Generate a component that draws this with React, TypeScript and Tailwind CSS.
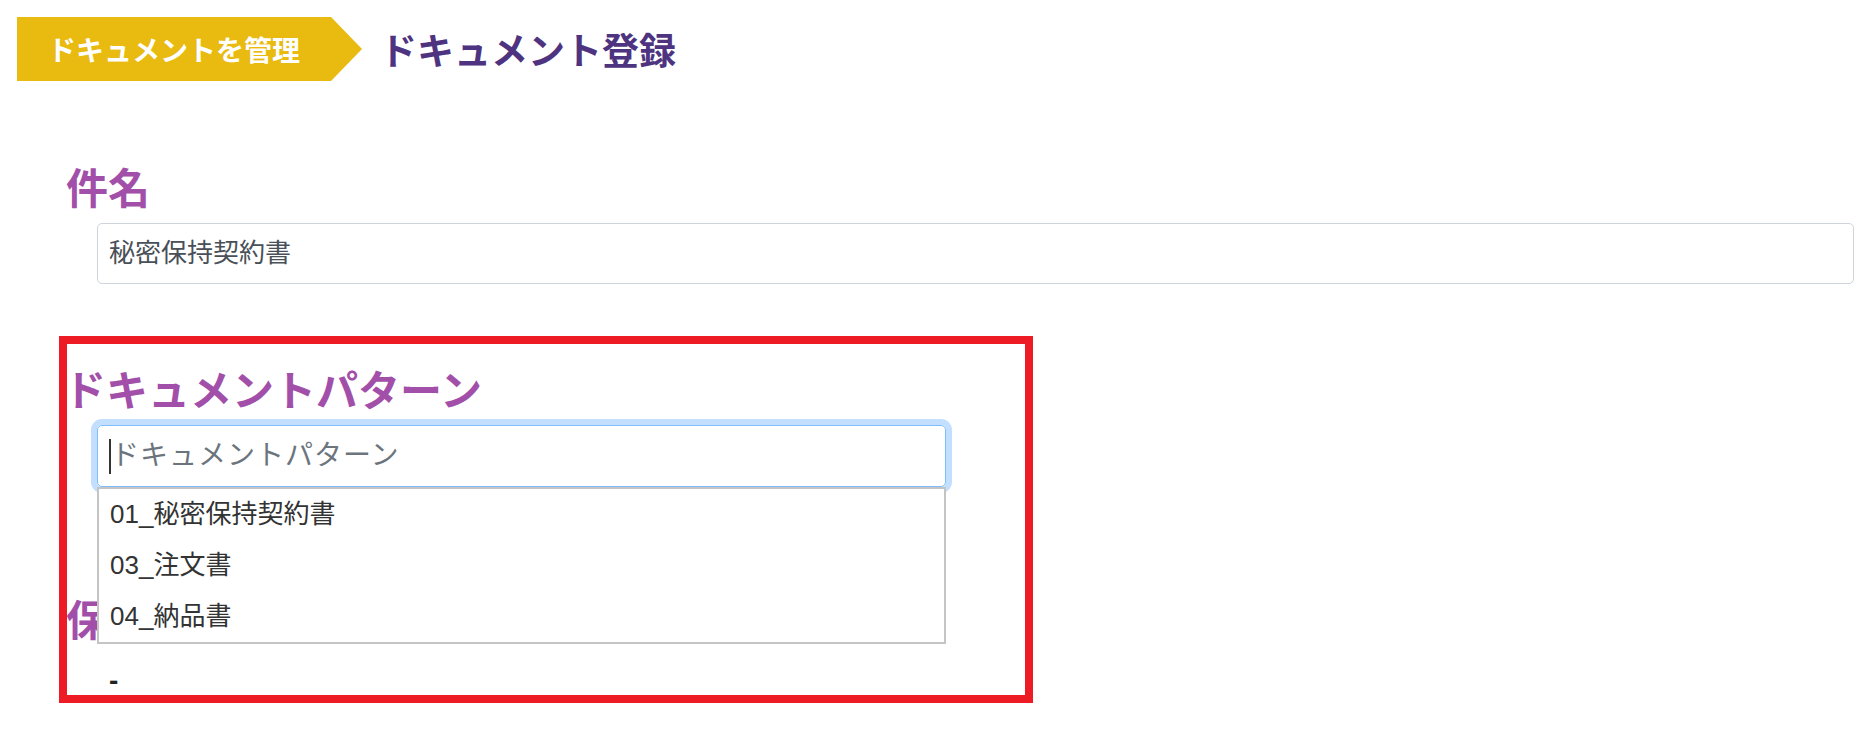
import React from "react";

const jp = { fontFamily: '"Noto Sans CJK JP", "Noto Sans", sans-serif' };
const field = { fontFamily: '"Liberation Sans", "Noto Sans CJK JP", sans-serif' };

const patterns = ["01_秘密保持契約書", "03_注文書", "04_納品書"];

function Label({ children }: { children: React.ReactNode }) {
  return <h2 className="text-[42px] leading-[48px] font-bold text-[#a24fa9]">{children}</h2>;
}

export default function App() {
  return (
    <div className="relative min-h-[744px] bg-white pr-[19px]" style={jp}>
      <div className="flex items-center pt-[17px] pl-[17px]">
        <div className="flex h-16">
          <div className="w-[314px] bg-[#e9ba0f] flex items-center justify-center text-white text-[28px] font-bold">ドキュメントを管理</div>
          <div className="w-0 h-0 border-y-[32px] border-y-transparent border-l-[31px] border-l-[#e9ba0f]" />
        </div>
        <h1 className="ml-[18px] text-[37px] leading-[48px] font-bold text-[#4e3480]">ドキュメント登録</h1>
      </div>

      <div className="pl-[66px]">
        <section className="mt-[81px]">
          <Label>件名</Label>
          <div className="mt-[13px] ml-[31px] h-[61px] flex items-center px-[11px] border border-[#ced4da] rounded-[5px] text-[26px] text-[#495057]" style={field}>
            秘密保持契約書
          </div>
        </section>

        <section className="mt-[80px]">
          <div className="-ml-[2px]"><Label>ドキュメントパターン</Label></div>
          <div className="relative mt-[13px] ml-[31px] w-[849px]">
            <div className="h-[62px] flex items-center pl-[11px] border border-[#80bdff] rounded-[5px] shadow-[0_0_0_6px_#c2dfff] text-[28px] tracking-[1px] text-[#6c757d]" style={field}>
              <span className="w-[2px] h-[35px] bg-[#333]" />
              ドキュメントパターン
            </div>
            <ul className="absolute left-0 top-full w-full z-10 bg-white border-2 border-[#c4c4c4] text-[26px] text-[#333]" style={field}>
              {patterns.map((p) => (
                <li key={p} className="h-[51px] flex items-center px-[11px]">{p}</li>
              ))}
            </ul>
          </div>
        </section>

        <section className="mt-[107px]">
          <Label>保管場所</Label>
          <p className="mt-[19px] ml-[43px] text-[28px] leading-[39px] font-bold text-[#222]" style={field}>-</p>
        </section>
      </div>

      <div className="absolute left-[59px] top-[336px] w-[974px] h-[367px] border-8 border-[#ed1c24] pointer-events-none" />
    </div>
  );
}
